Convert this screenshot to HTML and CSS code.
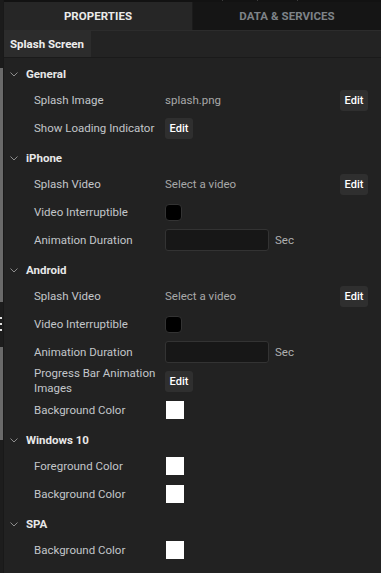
FILE: index.html
```html
<!DOCTYPE html>
<html>
<head>
<meta charset="utf-8">
<link rel="stylesheet" href="styles.css">
</head>
<body>
<div class="app">
  <div class="rail">
    <div class="rail-top"></div>
    <div class="rail-thumb rail-thumb-a"></div>
    <div class="rail-handle"><span></span><span></span><span></span></div>
    <div class="rail-thumb rail-thumb-b"></div>
    <div class="rail-rest"></div>
  </div>
  <div class="panel">
    <div class="topstrip"><span class="mark m1"></span><span class="mark m2"></span><span class="mark m3"></span></div>
    <div class="tabs">
      <div class="tab active">PROPERTIES</div>
      <div class="tab">DATA &amp; SERVICES</div>
    </div>
    <div class="subtabs">
      <div class="subtab">Splash Screen</div>
    </div>
    <div class="content">
      <div class="sec-head"><svg class="chev" width="8" height="5" viewBox="0 0 8 5"><path d="M0.5 0.5 L4 4 L7.5 0.5" fill="none" stroke="#8c8c8c" stroke-width="1"/></svg><span>General</span></div>
      <div class="row"><div class="label">Splash Image</div><div class="val"><span class="text">splash.png</span><span class="btn right">Edit</span></div></div>
      <div class="row"><div class="label">Show Loading Indicator</div><div class="val"><span class="btn">Edit</span></div></div>

      <div class="sec-head"><svg class="chev" width="8" height="5" viewBox="0 0 8 5"><path d="M0.5 0.5 L4 4 L7.5 0.5" fill="none" stroke="#8c8c8c" stroke-width="1"/></svg><span>iPhone</span></div>
      <div class="row"><div class="label">Splash Video</div><div class="val"><span class="text">Select a video</span><span class="btn right">Edit</span></div></div>
      <div class="row"><div class="label">Video Interruptible</div><div class="val"><span class="check"></span></div></div>
      <div class="row"><div class="label">Animation Duration</div><div class="val"><span class="input"></span><span class="unit">Sec</span></div></div>

      <div class="sec-head"><svg class="chev" width="8" height="5" viewBox="0 0 8 5"><path d="M0.5 0.5 L4 4 L7.5 0.5" fill="none" stroke="#8c8c8c" stroke-width="1"/></svg><span>Android</span></div>
      <div class="row"><div class="label">Splash Video</div><div class="val"><span class="text">Select a video</span><span class="btn right">Edit</span></div></div>
      <div class="row"><div class="label">Video Interruptible</div><div class="val"><span class="check"></span></div></div>
      <div class="row"><div class="label">Animation Duration</div><div class="val"><span class="input"></span><span class="unit">Sec</span></div></div>
      <div class="row tall"><div class="label wrap">Progress Bar Animation Images</div><div class="val"><span class="btn">Edit</span></div></div>
      <div class="row"><div class="label">Background Color</div><div class="val"><span class="swatch"></span></div></div>

      <div class="sec-head"><svg class="chev" width="8" height="5" viewBox="0 0 8 5"><path d="M0.5 0.5 L4 4 L7.5 0.5" fill="none" stroke="#8c8c8c" stroke-width="1"/></svg><span>Windows 10</span></div>
      <div class="row"><div class="label">Foreground Color</div><div class="val"><span class="swatch"></span></div></div>
      <div class="row"><div class="label">Background Color</div><div class="val"><span class="swatch"></span></div></div>

      <div class="sec-head"><svg class="chev" width="8" height="5" viewBox="0 0 8 5"><path d="M0.5 0.5 L4 4 L7.5 0.5" fill="none" stroke="#8c8c8c" stroke-width="1"/></svg><span>SPA</span></div>
      <div class="row"><div class="label">Background Color</div><div class="val"><span class="swatch"></span></div></div>
    </div>
  </div>
</div>
</body>
</html>
```

FILE: styles.css
```css
* { box-sizing: border-box; }
html, body { margin: 0; padding: 0; }
body {
  background: #222222;
  font-family: Roboto, "Liberation Sans", sans-serif;
  font-size: 11.5px;
  color: #c4c4c4;
  width: 381px;
  height: 573px;
  overflow: hidden;
}
.app {
  display: flex;
  height: 573px;
}
.rail {
  width: 4px;
  display: flex;
  flex-direction: column;
  border-right: 1px solid #191919;
  background: #1d1d1d;
}
.rail-top { height: 68px; background: #1b1b1b; }
.rail-thumb { background: #6a6a6a; }
.rail-thumb-a { height: 234px; }
.rail-thumb-b { height: 93px; }
.rail-handle {
  height: 45px;
  background: #1d1d1d;
  display: flex;
  flex-direction: column;
  padding-top: 15px;
  gap: 4px;
}
.rail-handle span { display: block; width: 2px; height: 2px; background: #e0e0e0; }
.rail-rest { flex: 1; }

.panel {
  flex: 1;
  display: flex;
  flex-direction: column;
}
.topstrip {
  height: 2px;
  background: #121212;
  display: flex;
}
.mark { display: block; width: 1px; height: 1px; background: #3a3a3a; }
.m1 { margin-left: 218px; }
.m2 { margin-left: 34px; }
.m3 { margin-left: 39px; }

.tabs {
  display: flex;
  height: 29px;
  border-bottom: 1px solid #2c2c2c;
}
.tab {
  display: flex;
  align-items: center;
  justify-content: center;
  font-size: 11.5px;
  font-weight: 700;
  letter-spacing: 0.05px;
  color: #7e8388;
  background: #151515;
  flex: 1;
  white-space: nowrap;
}
.tab.active {
  flex: 0 0 189px;
  background: #262626;
  color: #eaeaea;
  border-right: 1px solid #1b1b1b;
}
.subtabs {
  display: flex;
  height: 27px;
  background: #232323;
  border-bottom: 1px solid #1a1a1a;
}
.subtab {
  display: flex;
  align-items: center;
  padding: 0 6px;
  width: 87px;
  background: #2c2c2c;
  color: #eeeeee;
  font-weight: 700;
  font-size: 11.5px;
  white-space: nowrap;
}
.content {
  display: flex;
  flex-direction: column;
}
.sec-head {
  display: flex;
  align-items: center;
  height: 24px;
  margin-top: 4px;
  padding-left: 6px;
  color: #e8e8e8;
  font-weight: 700;
  font-size: 11.5px;
}
.chev { margin-right: 8px; margin-top: 1px; }
.row {
  display: flex;
  align-items: center;
  height: 28px;
  padding-left: 30px;
  padding-right: 13px;
}
.row.tall { height: 30px; }
.label {
  width: 131px;
  padding-right: 4px;
  line-height: 15px;
  color: #c2c6ca;
  white-space: nowrap;
}
.label.wrap { white-space: normal; }
.val {
  flex: 1;
  display: flex;
  align-items: center;
}
.text { color: #a8a8a8; }
.btn {
  display: inline-flex;
  align-items: center;
  justify-content: center;
  width: 28px;
  height: 21px;
  border-radius: 3px;
  background: #2f2f2f;
  color: #ffffff;
  font-size: 11px;
  font-weight: 500;
}
.btn.right { margin-left: auto; }
.check {
  width: 17px;
  height: 17px;
  background: #000;
  border: 1px solid #333;
  border-radius: 4px;
}
.input {
  width: 104px;
  height: 22px;
  background: #171717;
  border: 1px solid #333;
  border-radius: 3px;
}
.unit { margin-left: 6px; color: #b0b0b0; }
.swatch {
  width: 18px;
  height: 18px;
  background: #ffffff;
  margin-left: 1px;
}
```
